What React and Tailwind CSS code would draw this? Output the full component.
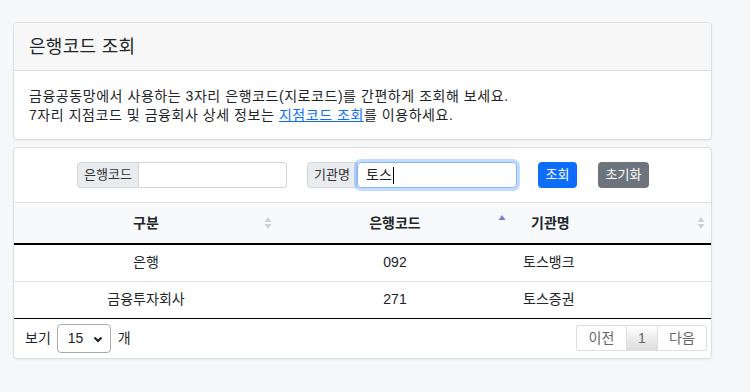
import React from 'react';

const rows = [
    { type: '은행', code: '092', name: '토스뱅크' },
    { type: '금융투자회사', code: '271', name: '토스증권' },
];

const SortBoth = () => (
    <svg width="8" height="14" viewBox="0 0 8 14" className="shrink-0">
        <path d="M4 1 L7.5 6 L0.5 6 Z" fill="#cfcfcf" />
        <path d="M4 13 L7.5 8 L0.5 8 Z" fill="#cfcfcf" />
    </svg>
);

const SortAsc = () => (
    <svg width="8" height="14" viewBox="0 0 8 14" className="shrink-0">
        <path d="M4 1 L7.5 6 L0.5 6 Z" fill="#7b7fd4" />
    </svg>
);

const App = () => {
    return (
        <div
            className="min-h-[392px] w-[750px] bg-[#f6f7f9] pt-[22px] pl-[13px] text-[#212529]"
            style={{ fontFamily: '"Liberation Sans", "Noto Sans CJK KR", sans-serif' }}
        >
            {/* Intro card */}
            <div className="w-[699px] rounded-[4px] border border-[#dedede] bg-white shadow-[0_1px_2px_rgba(0,0,0,0.05)] overflow-hidden">
                <div className="h-[48px] border-b border-[#dedede] bg-[#f7f7f7] px-[15px] flex items-center">
                    <h2 className="text-[18px] font-normal tracking-[0.3px] leading-none">은행코드 조회</h2>
                </div>
                <div className="px-[15px] pt-[16px] pb-[14px] text-[14px] leading-[19px] tracking-[0.55px]">
                    <p>금융공동망에서 사용하는 3자리 은행코드(지로코드)를 간편하게 조회해 보세요.</p>
                    <p>
                        7자리 지점코드 및 금융회사 상세 정보는{' '}
                        <a href="#" className="text-[#0d6efd] underline">지점코드 조회</a>를 이용하세요.
                    </p>
                </div>
            </div>

            {/* Search + table card */}
            <div className="mt-[7px] w-[699px] rounded-[4px] border border-[#dedede] bg-white shadow-[0_1px_2px_rgba(0,0,0,0.05)] overflow-hidden">
                <div className="h-[55px] border-b border-[#dee2e6] flex items-center pl-[63px] text-[13px]">
                    <div className="flex h-[26px]">
                        <span className="w-[62px] flex items-center justify-center rounded-l-[4px] border border-[#ced4da] bg-[#e9ecef] text-[#333]">은행코드</span>
                        <div className="w-[148px] rounded-r-[4px] border border-l-0 border-[#ced4da] bg-white" />
                    </div>
                    <div className="ml-[20px] flex h-[26px]">
                        <span className="w-[50px] flex items-center justify-center rounded-l-[4px] border border-[#ced4da] bg-[#e9ecef] text-[#333]">기관명</span>
                        <div className="w-[160px] flex items-center rounded-[4px] border border-[#86b7fe] bg-white pl-[8px] text-[14px] shadow-[0_0_0_3px_rgba(13,110,253,0.25)]">
                            토스<span className="ml-[1px] h-[17px] w-px bg-black" />
                        </div>
                    </div>
                    <button className="ml-[21px] h-[26px] w-[39px] rounded-[4px] bg-[#0d6efd] text-white text-[13px]">조회</button>
                    <button className="ml-[21px] h-[26px] w-[51px] rounded-[4px] bg-[#6c757d] text-white text-[13px]">초기화</button>
                </div>

                <table className="w-full border-collapse text-[14px]">
                    <thead>
                        <tr className="h-[41px] bg-[#f8f9fa] border-b-2 border-black">
                            <th className="w-[264px] font-bold">
                                <div className="relative flex items-center justify-center">
                                    구분
                                    <span className="absolute right-[6px] top-1/2 -translate-y-1/2 flex"><SortBoth /></span>
                                </div>
                            </th>
                            <th className="w-[234px] font-bold">
                                <div className="relative flex items-center justify-center">
                                    은행코드
                                    <span className="absolute right-[6px] top-1/2 -translate-y-[9px] flex"><SortAsc /></span>
                                </div>
                            </th>
                            <th className="font-bold text-left">
                                <div className="relative flex items-center pl-[19px]">
                                    기관명
                                    <span className="absolute right-[6px] top-1/2 -translate-y-1/2 flex"><SortBoth /></span>
                                </div>
                            </th>
                        </tr>
                    </thead>
                    <tbody>
                        {rows.map((r, i) => (
                            <tr key={r.code} className={`h-[37px] ${i === rows.length - 1 ? 'border-b-[1.5px] border-black' : 'border-b border-[#dee2e6]'}`}>
                                <td className="text-center">{r.type}</td>
                                <td className="text-center">{r.code}</td>
                                <td className="pl-[11px]">{r.name}</td>
                            </tr>
                        ))}
                    </tbody>
                </table>

                {/* Footer */}
                <div className="h-[39px] flex items-center justify-between pl-[11px] pr-[4px] text-[14px]">
                    <div className="flex items-center">
                        <span>보기</span>
                        <div className="relative ml-[6px] h-[29px] w-[54px] rounded-[4px] border border-[#aaa] flex items-center pl-[10px]">
                            15
                            <svg width="10" height="8" viewBox="0 0 10 8" className="absolute right-[7px] top-[11px]">
                                <path d="M1.5 1.5 L5 5 L8.5 1.5" stroke="#222" strokeWidth="2.2" fill="none" />
                            </svg>
                        </div>
                        <span className="ml-[7px]">개</span>
                    </div>
                    <div className="flex h-[26px] text-[14px] text-[#666]">
                        <span className="w-[51px] flex items-center justify-center border border-[#dedede] rounded-l-[2px] bg-white">이전</span>
                        <span className="w-[30px] flex items-center justify-center border-y border-[#dedede] bg-linear-to-b from-white to-[#dcdcdc]">1</span>
                        <span className="w-[50px] flex items-center justify-center border border-[#dedede] rounded-r-[2px] bg-white">다음</span>
                    </div>
                </div>
            </div>
        </div>
    );
};

export default App;
